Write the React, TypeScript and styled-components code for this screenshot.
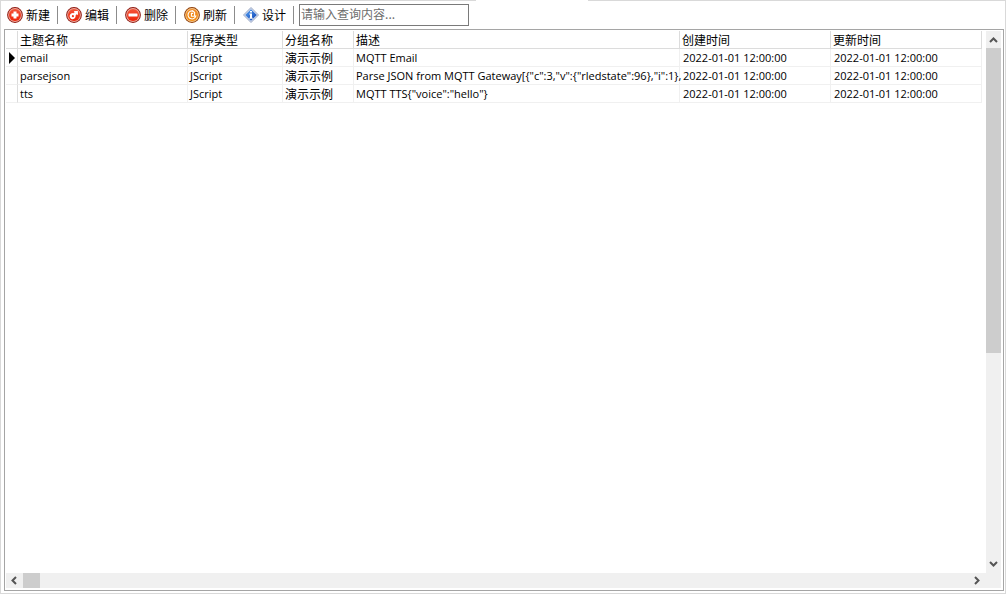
import React from "react";
import styled, { createGlobalStyle } from "styled-components";

const latin = '"Open Sans", "Noto Sans CJK SC", sans-serif';
const chinese = '"Noto Sans CJK SC", sans-serif';

const GlobalStyle = createGlobalStyle`
  * { box-sizing: border-box; }
  body { margin: 0; background: #fff; color: #000; font: 12px/18px ${chinese}; }
  button, input { font: inherit; color: inherit; }
`;

const Window = styled.main`
  position: relative;
  display: flex;
  flex-direction: column;
  min-height: 100vh;
  padding: 0 1px 2px 3px;
  border: 1px solid #d9d9d9;
`;

const TopGap = styled.div`
  position: absolute;
  top: -1px;
  left: 475px;
  width: 112px;
  height: 1px;
  background: #fff;
`;

const Toolbar = styled.div`
  display: flex;
  align-items: center;
  height: 28px;
  padding-left: 3px;
`;

const ToolButton = styled.button`
  display: flex;
  align-items: center;
  gap: 3px;
  margin: 0 7px 0 0;
  padding: 0;
  border: 0;
  background: none;
  line-height: 18px;
  white-space: nowrap;

  svg { display: block; }
`;

const Separator = styled.span<{ $last?: boolean }>`
  width: 1px;
  height: 18px;
  margin-right: ${(p) => (p.$last ? 5 : 8)}px;
  background: #8c8c8c;
`;

const SearchInput = styled.input`
  width: 170px;
  height: 22px;
  padding: 0 1px 3px;
  border: 1px solid #7a7a7a;
  border-radius: 0;
  outline: none;
  background: #fff;
  font-family: ${chinese};

  &::placeholder { color: #6d6d6d; opacity: 1; }
`;

const Frame = styled.section`
  display: grid;
  grid-template-columns: minmax(0, 1fr) 15px;
  grid-template-rows: minmax(0, 1fr) 15px;
  flex: 1;
  padding: 1px 2px 2px 1px;
  border: 1px solid #a5a5a5;
`;

const Viewport = styled.div`
  overflow: hidden;
`;

const Table = styled.table`
  width: 976px;
  table-layout: fixed;
  border-collapse: separate;
  border-spacing: 0;
`;

const HeadCell = styled.th`
  height: 18px;
  padding: 0 2px;
  border-right: 1px solid #dcdcdc;
  border-bottom: 1px solid #dcdcdc;
  font-weight: 400;
  line-height: 17px;
  text-align: left;
  white-space: nowrap;
`;

type CellKind = "text" | "chinese" | "time";

const Cell = styled.td<{ $kind: CellKind }>`
  height: 18px;
  padding: 0 0 0 ${(p) => (p.$kind === "time" ? 3 : 2)}px;
  border-right: 1px solid #f0f0f0;
  border-bottom: 1px solid #f0f0f0;
  font-family: ${(p) => (p.$kind === "chinese" ? chinese : latin)};
  font-size: ${(p) => (p.$kind === "chinese" ? 12 : 11)}px;
  line-height: 17px;
  white-space: nowrap;
`;

const CellText = styled.div`
  overflow: clip;
  overflow-clip-margin: 3px;
`;

const MarkerCell = styled.td`
  height: 18px;
  padding: 0 0 0 3px;
  border-right: 1px solid #dcdcdc;
  border-bottom: 1px solid #f0f0f0;

  svg { display: block; }
`;

const ScrollBar = styled.div<{ $horizontal?: boolean }>`
  display: flex;
  flex-direction: ${(p) => (p.$horizontal ? "row" : "column")};
  background: #f0f0f0;
`;

const ScrollButton = styled.button`
  display: flex;
  flex: 0 0 17px;
  align-items: center;
  justify-content: center;
  padding: 0;
  border: 0;
  background: none;
`;

const Track = styled.div<{ $horizontal?: boolean }>`
  display: flex;
  flex: 1;
  flex-direction: ${(p) => (p.$horizontal ? "row" : "column")};
`;

const Thumb = styled.div<{ $size: string }>`
  flex: 0 0 ${(p) => p.$size};
  background: #cdcdcd;
`;

const Corner = styled.div`
  background: #f0f0f0;
`;

type BadgeKind = "add" | "edit" | "remove" | "refresh";

function Badge({ kind }: { kind: BadgeKind }) {
  const orange = kind === "refresh";
  const rim = orange ? "#8f3e08" : "#8e1a12";
  const id = `badge-${kind}`;
  return (
    <svg width="16" height="16" viewBox="0 0 16 16" aria-hidden="true">
      <defs>
        <linearGradient id={id} x1="0" y1="0" x2="0" y2="1">
          <stop offset="0" stopColor={orange ? "#f08a28" : "#f4553a"} />
          <stop offset="1" stopColor={orange ? "#f28c10" : "#ee2408"} />
        </linearGradient>
      </defs>
      <circle cx="8" cy="8" r="7.9" fill={rim} />
      <circle cx="8" cy="8" r="6.9" fill={orange ? "#f9c88a" : "#f0aa9c"} />
      <circle cx="8" cy="8" r="6" fill={`url(#${id})`} />
      {kind === "add" && <path d="M6.5 4.5h3v2h2v3h-2v2h-3v-2h-2v-3h2z" fill="#fff" />}
      {kind === "remove" && <rect x="3.5" y="6.5" width="9" height="3" rx=".5" fill="#fff" />}
      {kind === "edit" && (
        <g>
          <path
            d="M11.9 3.9 12 8 10.6 7.2 9.6 8.6A3 3 0 1 1 7.3 6.2L8.7 5.2 7.8 4z"
            fill="#fff"
          />
          <circle cx="6.9" cy="9.2" r="1.1" fill="#f0371c" />
        </g>
      )}
      {kind === "refresh" && (
        <g fill="none" stroke="#fff" strokeWidth="1.1">
          <path d="M9.5 4.2A4 4 0 1 0 12 8.4" />
          <path d="M9.2 6.4H7.4v2.8h3.2V5.4L8 3.6" />
        </g>
      )}
    </svg>
  );
}

function DesignIcon() {
  return (
    <svg width="16" height="16" viewBox="0 0 16 16" aria-hidden="true">
      <defs>
        <linearGradient id="design" x1="0" y1="0" x2="1" y2="1">
          <stop offset="0" stopColor="#5aa6f4" />
          <stop offset="1" stopColor="#0a3cb0" />
        </linearGradient>
      </defs>
      <path d="M8 .5 15.5 8 8 15.5.5 8z" fill="#d6deee" stroke="#98a6c4" strokeWidth="1" strokeLinejoin="round" />
      <path d="M8 2.2 13.8 8 8 13.8 2.2 8z" fill="url(#design)" />
      <path d="M7 4h2v1.6H7zM6.3 6.5H9v4.2h.8v1.1H6.3v-1.1H7V7.6h-.7z" fill="#fff" />
    </svg>
  );
}

const arrows = {
  up: "M4 10 7.5 6.5 11 10",
  down: "M4 5 7.5 8.5 11 5",
  left: "M9 4 5.5 7.5 9 11",
  right: "M5 4 8.5 7.5 5 11",
};

function Arrow({ to }: { to: keyof typeof arrows }) {
  return (
    <svg width="15" height="15" viewBox="0 0 15 15" aria-hidden="true">
      <path d={arrows[to]} fill="none" stroke="#555" strokeWidth="2" />
    </svg>
  );
}

const tools: { label: string; icon: React.ReactNode }[] = [
  { label: "新建", icon: <Badge kind="add" /> },
  { label: "编辑", icon: <Badge kind="edit" /> },
  { label: "删除", icon: <Badge kind="remove" /> },
  { label: "刷新", icon: <Badge kind="refresh" /> },
  { label: "设计", icon: <DesignIcon /> },
];

const columns: { label: string; width: number; kind: CellKind }[] = [
  { label: "主题名称", width: 170, kind: "text" },
  { label: "程序类型", width: 95, kind: "text" },
  { label: "分组名称", width: 71, kind: "chinese" },
  { label: "描述", width: 326, kind: "text" },
  { label: "创建时间", width: 151, kind: "time" },
  { label: "更新时间", width: 151, kind: "time" },
];

const time = "2022-01-01 12:00:00";
const rows = [
  ["email", "JScript", "演示示例", "MQTT Email", time, time],
  ["parsejson", "JScript", "演示示例", 'Parse JSON from MQTT Gateway[{"c":3,"v":{"rledstate":96},"i":1},', time, time],
  ["tts", "JScript", "演示示例", 'MQTT TTS{"voice":"hello"}', time, time],
];

export default function App() {
  return (
    <>
      <GlobalStyle />
      <Window>
        <TopGap />
        <Toolbar role="toolbar">
          {tools.map((tool, i) => (
            <React.Fragment key={tool.label}>
              <ToolButton type="button">
                {tool.icon}
                {tool.label}
              </ToolButton>
              <Separator $last={i === tools.length - 1} />
            </React.Fragment>
          ))}
          <SearchInput type="text" aria-label="查询" placeholder="请输入查询内容..." />
        </Toolbar>
        <Frame>
          <Viewport>
            <Table>
              <colgroup>
                <col width="12" />
                {columns.map((c) => (
                  <col key={c.label} width={c.width} />
                ))}
              </colgroup>
              <thead>
                <tr>
                  <HeadCell />
                  {columns.map((c) => (
                    <HeadCell key={c.label} scope="col">{c.label}</HeadCell>
                  ))}
                </tr>
              </thead>
              <tbody>
                {rows.map((row, r) => (
                  <tr key={row[0]}>
                    <MarkerCell>
                      {r === 0 && (
                        <svg width="6" height="12" viewBox="0 0 6 12" aria-hidden="true">
                          <path d="M0 0 6 6 0 12z" fill="#000" />
                        </svg>
                      )}
                    </MarkerCell>
                    {row.map((value, c) => (
                      <Cell key={c} $kind={columns[c].kind}>
                        <CellText>{value}</CellText>
                      </Cell>
                    ))}
                  </tr>
                ))}
              </tbody>
            </Table>
          </Viewport>
          <ScrollBar>
            <ScrollButton type="button" aria-label="向上滚动"><Arrow to="up" /></ScrollButton>
            <Track>
              <Thumb $size="60%" />
            </Track>
            <ScrollButton type="button" aria-label="向下滚动"><Arrow to="down" /></ScrollButton>
          </ScrollBar>
          <ScrollBar $horizontal>
            <ScrollButton type="button" aria-label="向左滚动"><Arrow to="left" /></ScrollButton>
            <Track $horizontal>
              <Thumb $size="17px" />
            </Track>
            <ScrollButton type="button" aria-label="向右滚动"><Arrow to="right" /></ScrollButton>
          </ScrollBar>
          <Corner />
        </Frame>
      </Window>
    </>
  );
}
